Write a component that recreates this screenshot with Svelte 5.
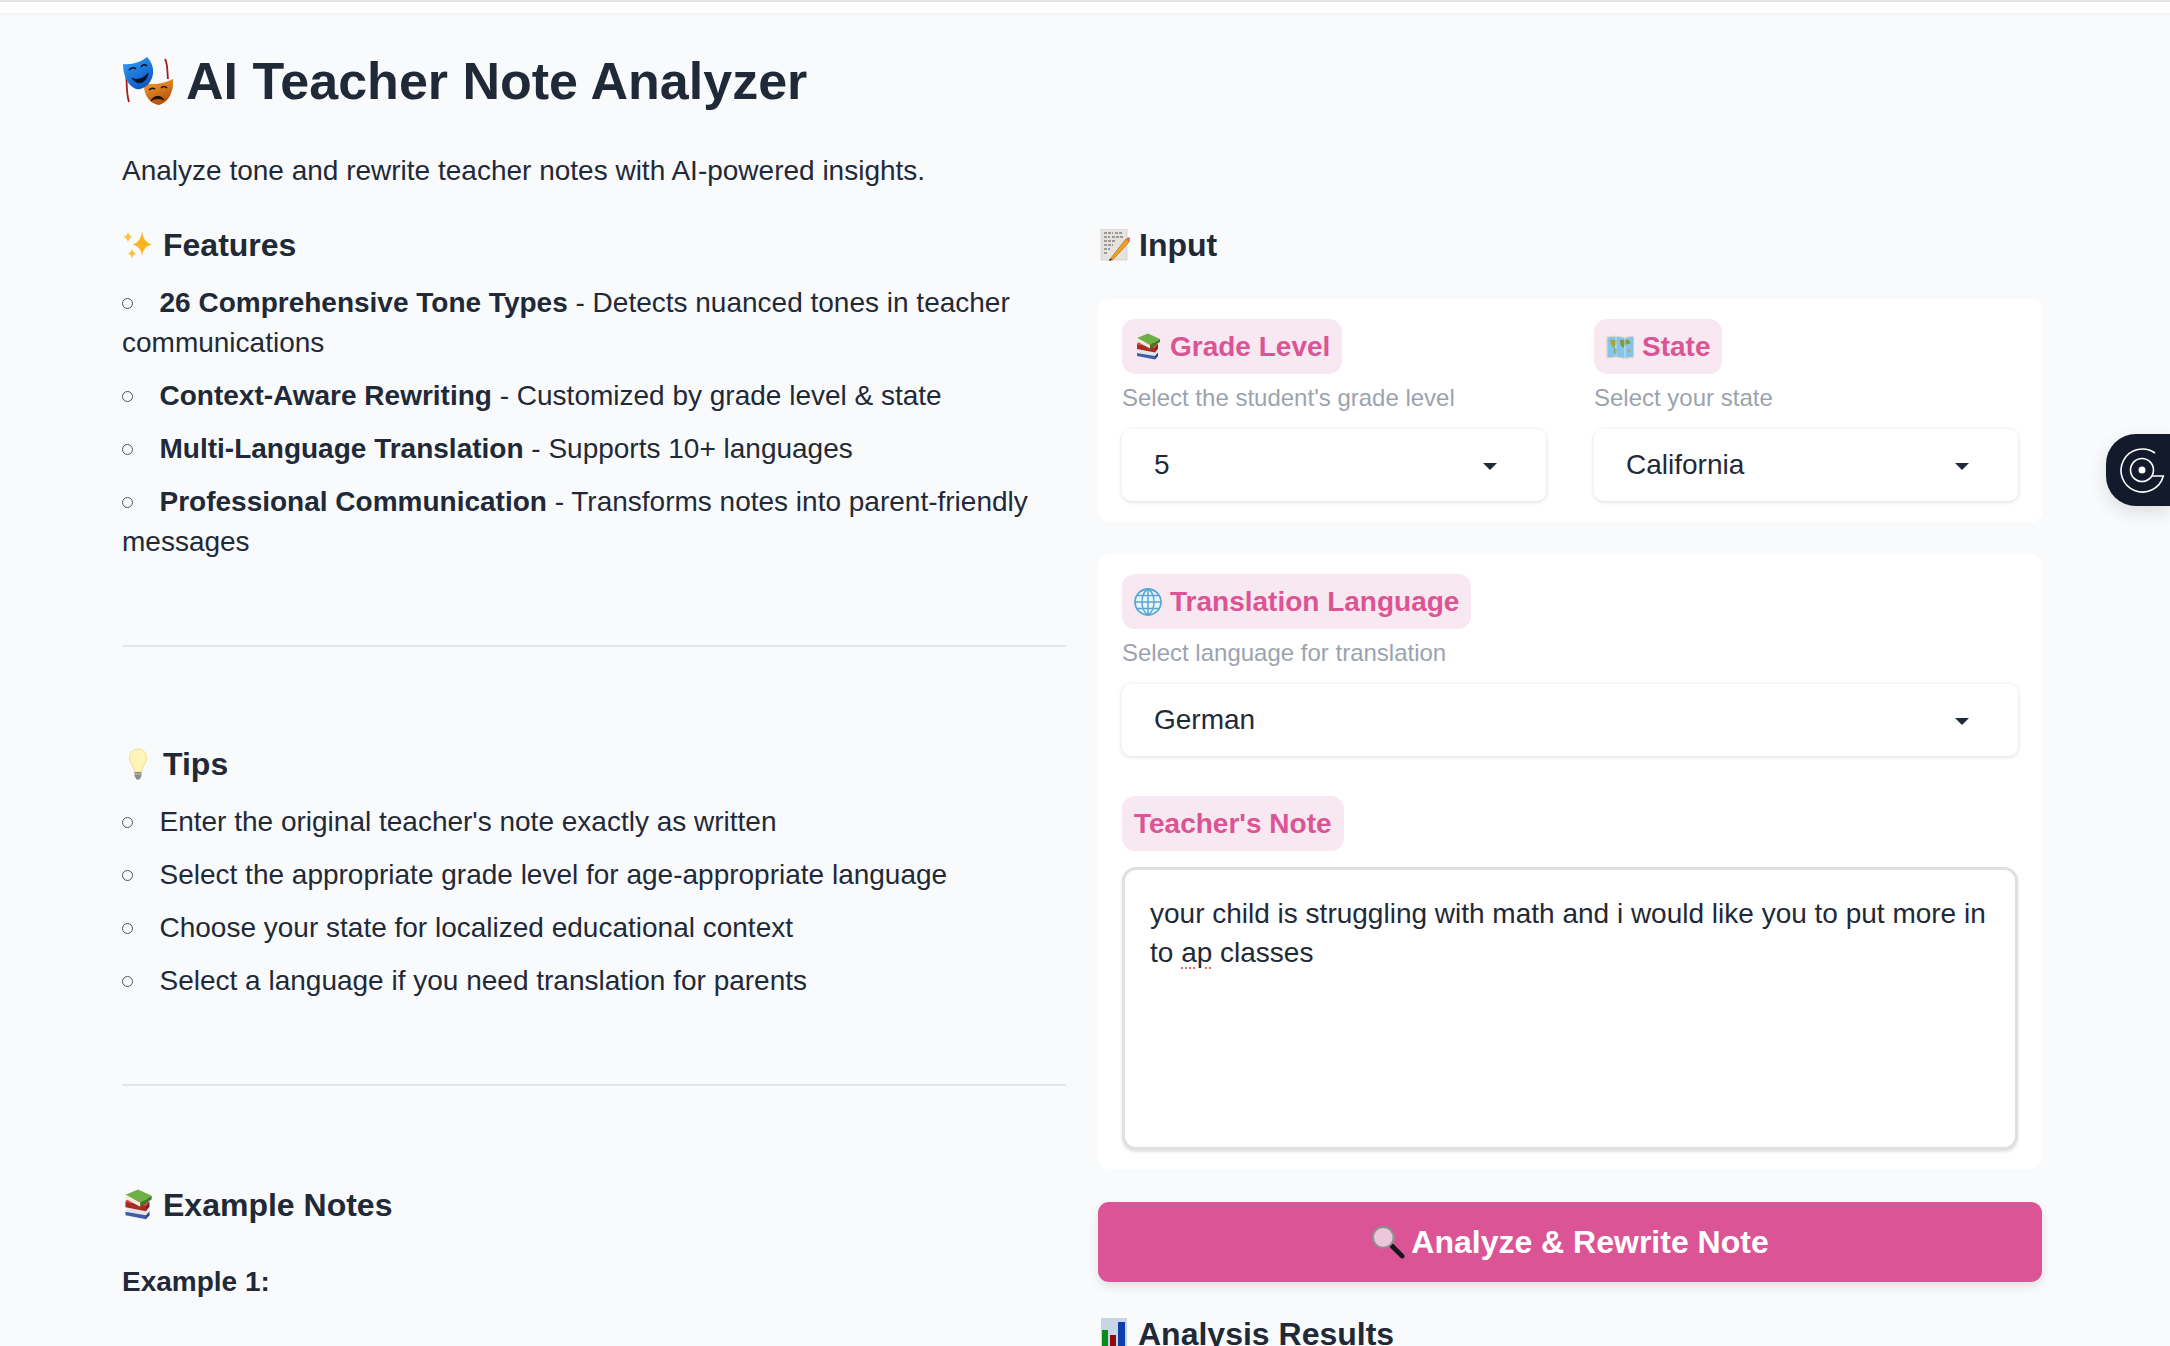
<script lang="ts">
	const features = [
		{ title: '26 Comprehensive Tone Types', text: ' - Detects nuanced tones in teacher communications' },
		{ title: 'Context-Aware Rewriting', text: ' - Customized by grade level & state' },
		{ title: 'Multi-Language Translation', text: ' - Supports 10+ languages' },
		{ title: 'Professional Communication', text: ' - Transforms notes into parent-friendly messages' }
	];
	const tips = [
		"Enter the original teacher's note exactly as written",
		'Select the appropriate grade level for age-appropriate language',
		'Choose your state for localized educational context',
		'Select a language if you need translation for parents'
	];
</script>

{#snippet masks()}
	<svg class="masks" viewBox="0 0 50 48">
		<defs>
			<linearGradient id="blueMask" x1="0" y1="0" x2="0.6" y2="1">
				<stop offset="0" stop-color="#35a4f4" />
				<stop offset="1" stop-color="#0c58c6" />
			</linearGradient>
			<linearGradient id="orangeMask" x1="0.2" y1="0" x2="0.7" y2="1">
				<stop offset="0" stop-color="#f5a32e" />
				<stop offset="1" stop-color="#ad4a08" />
			</linearGradient>
		</defs>
		<path d="M3 12C4 24 3 36 6 45" fill="none" stroke="#a81c1c" stroke-width="1.800" />
		<path d="M42 2C45 8 44 14 45 22" fill="none" stroke="#a81c1c" stroke-width="1.800" />
		<path d="M21 26C30 28 40 27 50 22C51 34 46 45 36 48C27 47 20 38 21 26Z" fill="url(#orangeMask)" />
		<path d="M26 33q3-3 6-1M38 31q3-3 6 0" fill="none" stroke="#1c0d02" stroke-width="1.600" />
		<path d="M28 44C31 38 38 38 41 43C37 41 32 41 28 44Z" fill="#1c0d02" stroke="#1c0d02" />
		<path d="M0 7C9 8 18 5 24 0C29 5 32 13 29 21C26 29 19 33 13 32C5 29 0 18 0 7Z" fill="url(#blueMask)" />
		<path d="M6 13q4-4 7-1M18 10q3-4 6-1" fill="none" stroke="#04122e" stroke-width="1.700" />
		<path d="M9 21C13 24 21 22 25 16C24 25 15 30 9 21Z" fill="#04122e" stroke="#04122e" />
	</svg>
{/snippet}

{#snippet sparkles()}
	<svg class="emoji" viewBox="7 8 32 32">
		<path d="M27 10Q27.800 21 37 23.500Q27.800 25 27 36Q26.200 25 17.500 23.500Q26.200 21 27 10Z" fill="#fbb41e" />
		<path d="M13 10Q13.400 15 17.500 16Q13.400 17 13 22Q12.600 17 8.500 16Q12.600 15 13 10Z" fill="#fcc043" />
		<path d="M17 27Q17.400 31 21 32.500Q17.400 33.500 17 38Q16.600 33.500 13 32.500Q16.600 31 17 27Z" fill="#fcc043" />
	</svg>
{/snippet}

{#snippet memo()}
	<svg class="emoji" viewBox="0 0 32 32">
		<rect x="3" y="0" width="26" height="31" fill="#e6e3df" stroke="#c9c6c2" stroke-width="0.6" />
		<path d="M6 4h9M17 4h8M6 8h6M14 8h11M6 12h12M6 16h9M6 20h6M6 24h4" stroke="#55524e" stroke-width="1" stroke-dasharray="3 1" />
		<path d="M13 29L11 31.500L15 30.500L31 13L28 10Z" fill="#f2a21f" stroke="#a5660c" stroke-width="0.7" />
		<path d="M28 10L31 13L32.500 11.500Q33 9 30 8Z" fill="#e8677a" />
		<path d="M12.500 29.500L11 31.500L14 30.800Z" fill="#222" />
	</svg>
{/snippet}

{#snippet books()}
	<svg class="emoji" viewBox="0 0 28 28">
		<path d="M3 20L21 23L24 19.500L5 16.500Z" fill="#e6e6e6" />
		<path d="M3 20L21 23V26.500L3 23Z" fill="#3d5fa8" />
		<path d="M21 23L24 19.500V23L21 26.500Z" fill="#2a4380" />
		<path d="M3 11L21 14.500L24 11L5 8Z" fill="#d24a38" />
		<path d="M3 11L21 14.500V19.500L3 16Z" fill="#a92c22" />
		<path d="M21 14.500L24 11V15.500L21 19.500Z" fill="#7e2018" />
		<path d="M3 5L14 0.500L26 6L16 12Z" fill="#6eb045" />
		<path d="M3 5L16 12V15.500L3 8.500Z" fill="#eeeee4" />
		<path d="M16 12L26 6V9L16 15.500Z" fill="#3f7a28" />
	</svg>
{/snippet}

{#snippet worldMap()}
	<svg class="emoji" viewBox="0 0 28 28">
		<path d="M1 4L10 3L19 4.500L28 3L28 24L19 25.500L10 24L1 25Z" fill="#86c4ec" stroke="#e3d6c4" stroke-width="1.200" />
		<path d="M4 7L11 6.500L10 12L7 15L5 11Z" fill="#a1a845" />
		<path d="M8 15L11 16L10 22L8.500 21Z" fill="#6c9a42" />
		<path d="M14 7L22 6.500L25 10L19 12L17 15L14.500 12Z" fill="#7d9c40" />
		<path d="M21 17L24 16.500L24.500 19L21.500 19.500Z" fill="#cba448" />
		<path d="M10 3V24M19 4.500V25.500" stroke="#d9ecf8" stroke-width="0.8" />
	</svg>
{/snippet}

{#snippet globe()}
	<svg class="emoji" viewBox="0 0 28 28">
		<circle cx="14" cy="14" r="13" fill="#e9f3f9" stroke="#5aa8d4" stroke-width="1.800" />
		<path d="M14 1V27M1 14H27M3 7.500H25M3 20.500H25M14 1C6 6 6 22 14 27M14 1C22 6 22 22 14 27" fill="none" stroke="#5aa8d4" stroke-width="1.500" />
	</svg>
{/snippet}

{#snippet bulb()}
	<svg class="emoji" viewBox="0 0 32 32">
		<path d="M16 1C10 1 7 6 7.500 11C8 16 12 18 12.500 24H19.500C20 18 24 16 24.500 11C25 6 22 1 16 1Z" fill="#fdf5b8" stroke="#ecd878" stroke-width="0.8" />
		<path d="M12.500 24H19.500V28L17.500 31.500H14.500L12.500 28Z" fill="#8d8d88" />
		<path d="M12.500 26H19.500" stroke="#d8d8d4" stroke-width="0.8" />
	</svg>
{/snippet}

{#snippet magnifier()}
	<svg class="lens" viewBox="0 0 36 36">
		<path d="M22 22L33 33" stroke="#15171a" stroke-width="5" stroke-linecap="round" />
		<circle cx="13" cy="13" r="11" fill="#eec6d9" stroke="#8f9094" stroke-width="2.200" />
	</svg>
{/snippet}

{#snippet chart()}
	<svg class="emoji" viewBox="0 0 32 32">
		<rect x="3" y="0" width="26" height="32" fill="#c8d5e2" />
		<rect x="4" y="12" width="6" height="20" fill="#0c8a1a" />
		<rect x="12" y="17" width="6" height="15" fill="#8f0a0a" />
		<rect x="20" y="4" width="7" height="28" fill="#0f3fa8" />
	</svg>
{/snippet}

{#snippet caret()}
	<svg class="caret" viewBox="0 0 14 7"><path d="M0 0H14L7 7Z" /></svg>
{/snippet}

<div class="page">
	<div class="topbar"></div>
	<main>
		<h1>{@render masks()}<span>AI Teacher Note Analyzer</span></h1>
		<p class="subtitle">Analyze tone and rewrite teacher notes with AI-powered insights.</p>

		<div class="columns">
			<section>
				<h2>{@render sparkles()}Features</h2>
				<ul>
					{#each features as item}
						<li><strong>{item.title}</strong>{item.text}</li>
					{/each}
				</ul>
				<hr class="first-rule" />
				<h2>{@render bulb()}Tips</h2>
				<ul>
					{#each tips as tip}
						<li>{tip}</li>
					{/each}
				</ul>
				<hr />
				<h2>{@render books()}Example Notes</h2>
				<p class="example">Example 1:</p>
			</section>

			<section>
				<h2 class="input-title">{@render memo()}Input</h2>

				<div class="card pair">
					<div>
						<div class="badge">{@render books()}Grade Level</div>
						<p class="help">Select the student's grade level</p>
						<div class="select">5{@render caret()}</div>
					</div>
					<div>
						<div class="badge">{@render worldMap()}State</div>
						<p class="help">Select your state</p>
						<div class="select">California{@render caret()}</div>
					</div>
				</div>

				<div class="card">
					<div class="badge">{@render globe()}Translation Language</div>
					<p class="help">Select language for translation</p>
					<div class="select">German{@render caret()}</div>
					<div class="badge note-badge">Teacher's Note</div>
					<div class="note">your child is struggling with math and i would like you to put more in to <span class="typo">ap</span> classes</div>
				</div>

				<button>{@render magnifier()}Analyze &amp; Rewrite Note</button>

				<h2 class="results">{@render chart()}Analysis Results</h2>
			</section>
		</div>
	</main>

	<div class="widget">
		<svg viewBox="0 0 48 48">
			<path d="M37 7A21.500 21.500 0 1 0 45.300 30H33.700" />
			<circle cx="24" cy="24" r="11.500" />
			<circle class="dot" cx="24" cy="24" r="3.500" />
		</svg>
	</div>
</div>

<style>
	:global(body) {
		margin: 0;
		background: #f9fafc;
	}
	* {
		box-sizing: border-box;
	}
	.page {
		position: relative;
		height: 1346px;
		overflow: hidden;
		font-family: 'Liberation Sans', Arial, sans-serif;
		color: #1f2937;
		background: #f9fafc;
	}
	.topbar {
		height: 15px;
		background: #fff;
		border-top: 2px solid #e2e5e1;
		border-bottom: 2px solid #f3f4f6;
	}
	main {
		padding: 35px 128px 0 122px;
	}
	h1 {
		display: flex;
		align-items: center;
		gap: 13px;
		margin: 0;
		font-size: 52px;
		line-height: 62px;
	}
	.masks {
		width: 50px;
		height: 48px;
		margin-left: 1px;
	}
	.subtitle {
		margin: 39px 0 0;
		font-size: 28px;
		line-height: 39px;
	}
	.columns {
		display: grid;
		grid-template-columns: 1fr 1fr;
		gap: 32px;
		margin-top: 34px;
	}
	h2 {
		display: flex;
		align-items: center;
		gap: 9px;
		margin: 0;
		font-size: 32px;
		line-height: 42px;
	}
	.emoji {
		width: 32px;
		height: 32px;
		flex: none;
	}
	ul {
		display: flex;
		flex-direction: column;
		gap: 13px;
		margin: 17px 0 0;
		padding: 0;
		list-style: none;
	}
	li {
		font-size: 28px;
		line-height: 40px;
	}
	li::before {
		content: '';
		display: inline-block;
		width: 9px;
		height: 9px;
		margin-right: 28px;
		border: 1.5px solid #4b5563;
		border-radius: 50%;
		vertical-align: 3px;
	}
	li::before {
		margin-right: 26.5px;
	}
	hr {
		height: 2px;
		margin: 83px 0 98px;
		border: 0;
		background: #e3e5e8;
	}
	.first-rule {
		margin-bottom: 96px;
	}
	.example {
		margin: 36px 0 0;
		font-size: 28px;
		font-weight: 700;
		line-height: 40px;
	}
	.input-title {
		margin-bottom: 33px;
	}
	.card {
		padding: 20px 24px 19px;
		border-radius: 11px;
		background: #fff;
	}
	.pair {
		display: grid;
		grid-template-columns: 1fr 1fr;
		gap: 48px;
		margin-bottom: 32px;
		padding-bottom: 21px;
	}
	.badge {
		display: flex;
		width: fit-content;
		align-items: center;
		gap: 8px;
		height: 55px;
		padding: 0 12px;
		border-radius: 13px;
		background: #f8e8f1;
		color: #db5494;
		font-size: 28px;
		font-weight: 700;
	}
	.badge .emoji {
		width: 28px;
		height: 28px;
	}
	.help {
		margin: 7px 0 14px;
		color: #9ca3af;
		font-size: 24px;
		line-height: 34px;
	}
	.select {
		display: flex;
		align-items: center;
		justify-content: space-between;
		height: 72px;
		padding: 0 49px 0 32px;
		border-radius: 9px;
		background: #fff;
		box-shadow: 0 1px 4px rgba(0, 0, 0, 0.14);
		font-size: 28px;
	}
	.caret {
		width: 14px;
		height: 7px;
		margin-top: 3px;
		fill: #1f2937;
	}
	.note-badge {
		margin: 40px 0 16px;
	}
	.note {
		height: 283px;
		padding: 24px 25px;
		border: 3px solid #e0e0e0;
		border-radius: 14px;
		background: #fff;
		box-shadow: 0 2px 3px rgba(0, 0, 0, 0.12);
		font-size: 28px;
		line-height: 39px;
	}
	.typo {
		text-decoration: underline dotted #ee6a55 2px;
		text-underline-offset: 5px;
	}
	button {
		display: flex;
		align-items: center;
		justify-content: center;
		gap: 6px;
		width: 100%;
		height: 80px;
		margin-top: 33px;
		border: 0;
		border-radius: 11px;
		background: #db5596;
		box-shadow: 0 4px 10px rgba(0, 0, 0, 0.1);
		color: #fff;
		font-family: inherit;
		font-size: 32px;
		font-weight: 700;
	}
	.lens {
		width: 34px;
		height: 34px;
	}
	.results {
		gap: 8px;
		margin-top: 31px;
		font-size: 32px;
		line-height: 42px;
	}
	.widget {
		position: absolute;
		top: 434px;
		right: 0;
		display: flex;
		align-items: center;
		width: 64px;
		height: 72px;
		padding-left: 12px;
		border-radius: 30px 0 0 30px;
		background: #121a2b;
		box-shadow: 0 6px 18px rgba(0, 0, 0, 0.12);
	}
	.widget svg {
		width: 48px;
		height: 48px;
		fill: none;
		stroke: #fff;
		stroke-width: 1.6;
	}
	.widget .dot {
		fill: #fff;
		stroke: none;
	}
</style>
